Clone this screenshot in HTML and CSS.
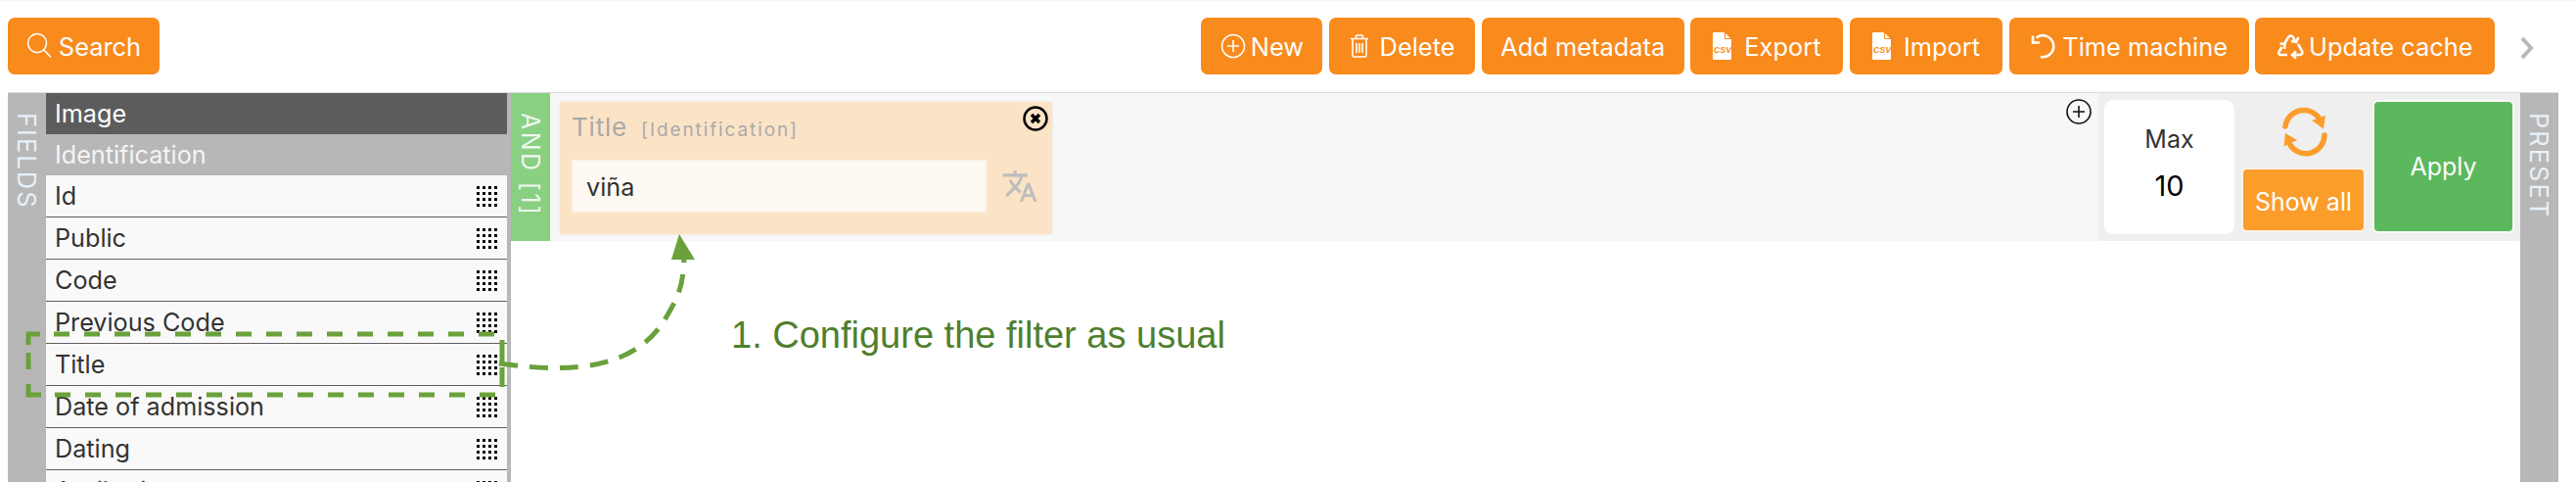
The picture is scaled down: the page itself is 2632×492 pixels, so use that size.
FILE: index.html
```html
<!DOCTYPE html>
<html lang="en">
<head>
<meta charset="utf-8">
<title>Search filters</title>
<link rel="stylesheet" href="styles.css">
</head>
<body>
<div class="page">
  <header class="toolbar">
    <button class="btn btn-search"><svg class="ico" width="26" height="28" viewBox="0 0 26 28"><circle cx="11" cy="11" r="9.5"/><path d="M18 18l7 7.5"/></svg>Search</button>
    <div class="actions">
      <button class="btn btn-new"><svg class="ico" width="26" height="26" viewBox="0 0 26 26"><circle cx="13" cy="13" r="11.5"/><path d="M13 7v12M7 13h12"/></svg>New</button>
      <button class="btn btn-delete"><svg class="ico" width="20" height="24" viewBox="0 0 20 24"><path d="M1 4.500h18M3 5v16.500q0 1.500 1.500 1.500h11q1.500 0 1.500-1.500V5M6.500 4V2q0-1 1-1h5q1 0 1 1v2M7 9v10M10 9v10M13 9v10"/></svg>Delete</button>
      <button class="btn btn-meta">Add metadata</button>
      <button class="btn btn-export"><svg width="20" height="28" viewBox="0 0 20 28"><path class="csv-file" d="M1 0h11l7 7v20a1 1 0 0 1-1 1H1a1 1 0 0 1-1-1V1a1 1 0 0 1 1-1z"/><path class="csv-fold" d="M12.500 0v6.500H19"/><text class="csv-text" x="10" y="21">CSV</text></svg>Export</button>
      <button class="btn btn-import"><svg width="20" height="28" viewBox="0 0 20 28"><path class="csv-file" d="M1 0h11l7 7v20a1 1 0 0 1-1 1H1a1 1 0 0 1-1-1V1a1 1 0 0 1 1-1z"/><path class="csv-fold" d="M12.500 0v6.500H19"/><text class="csv-text" x="10" y="21">CSV</text></svg>Import</button>
      <button class="btn btn-time"><svg class="ico ico-bold" width="28" height="26" viewBox="0 0 28 26"><path d="M6.500 4.500A11 11 0 1 1 11 24M3 2.500v7h7"/></svg>Time machine</button>
      <button class="btn btn-cache"><svg class="ico ico-bold" width="27" height="27" viewBox="0 0 27 27"><path d="M7 11L11 4Q13.500 1 16 4L18 8M21.500 4L19 9L14 8M21 11L25 18Q26.500 21.500 22.500 22L16 22M19 18.500L15 22L19 25.500M4.500 14L1.500 19Q.5 22 4 22L10 22M2.500 10.500L7.500 11L7 16"/></svg>Update cache</button>
      <svg class="chevron" width="14" height="24" viewBox="0 0 14 24"><path d="M2 2l9 10-9 10"/></svg>
    </div>
  </header>
  <main class="workspace">
    <div class="side-label">FIELDS</div>
    <section class="fields">
      <div class="group group-dark">Image</div>
      <div class="group group-light">Identification</div>
      <div class="field"><span>Id</span><i class="dots"></i></div>
      <div class="field"><span>Public</span><i class="dots"></i></div>
      <div class="field"><span>Code</span><i class="dots"></i></div>
      <div class="field"><span>Previous Code</span><i class="dots"></i></div>
      <div class="field"><span>Title</span><i class="dots"></i></div>
      <div class="field"><span>Date of admission</span><i class="dots"></i></div>
      <div class="field"><span>Dating</span><i class="dots"></i></div>
      <div class="field"><span>Attribution</span><i class="dots"></i></div>
    </section>
    <section class="center">
      <div class="filter-panel">
        <div class="and-label">AND [1]</div>
        <div class="filters">
          <article class="filter-card">
            <div class="filter-head"><span class="filter-title">Title</span><span class="filter-group">[Identification]</span></div>
            <div class="filter-body">
              <div class="filter-input">viña</div>
              <svg class="translate" width="38" height="38" viewBox="0 0 24 24"><path d="M12.870 15.070l-2.540-2.510.03-.03c1.740-1.940 2.980-4.170 3.710-6.530H17V4h-7V2H8v2H1v1.990h11.170C11.500 7.920 10.440 9.750 9 11.350 8.070 10.320 7.300 9.190 6.690 8h-2c.73 1.630 1.730 3.170 2.980 4.560l-5.090 5.020L4 19l5-5 3.110 3.110.76-2.040zM18.500 10h-2L12 22h2l1.120-3h4.750L21 22h2l-4.500-12zm-2.620 7l1.620-4.330L19.120 17h-3.240z"/></svg>
            </div>
            <svg class="close" width="26" height="26" viewBox="0 0 26 26"><circle cx="13" cy="13" r="11.500"/><path d="M9 9l8 8M17 9l-8 8"/></svg>
          </article>
          <svg class="add" width="26" height="26" viewBox="0 0 26 26"><circle cx="13" cy="13" r="12"/><path d="M13 7v12M7 13h12"/></svg>
        </div>
        <div class="controls">
          <div class="max-box"><span class="max-label">Max</span><span class="max-value">10</span></div>
          <div class="show-col">
            <svg class="sync" width="60" height="60" viewBox="13 8 60 60"><path class="sync-arc" d="M24 31A19 19 0 0 1 58 22M64 40A19 19 0 0 1 29 50"/><path class="sync-head" d="M65 20l-2 13.500-12-8.500zM24 38l-1.500 13.500 13.500-6.500z"/></svg>
            <button class="btn-show">Show all</button>
          </div>
          <button class="btn-apply">Apply</button>
        </div>
      </div>
    </section>
    <div class="side-label">PRESET</div>
  </main>
  <svg class="guide" width="2632" height="492" viewBox="0 0 2632 492">
    <path class="guide-solid" d="M29 352V341H41M29 360V377M29 392V403H42M513 347V369M513 375V395"/>
    <path class="guide-line" d="M55 341H506M56 403H508"/>
    <path class="guide-curve" d="M510 371C590 382 650 375 680 325C695 300 698 290 699 262"/>
    <path class="guide-head" d="M694 239L710 265L686 265Z"/>
  </svg>
  <p class="note">1. Configure the filter as usual</p>
</div>
</body>
</html>
```
FILE: styles.css
```css
* { box-sizing: border-box; }
html, body { margin: 0; padding: 0; background: #fff; }
body { font-family: Inter, "Liberation Sans", sans-serif; font-size: 25.2px; color: #333; }
.page { position: relative; width: 2632px; height: 492px; overflow: hidden; border-top: 1px solid #f6f6f6; }

.toolbar { display: flex; justify-content: space-between; height: 93px; padding: 17px 43px 0 8px; }
.actions { display: flex; gap: 6.67px; align-items: flex-start; }
.btn { display: flex; align-items: center; justify-content: center; gap: 7px; height: 58px; padding: 0; border: 0; border-radius: 7px; background: #f98a1c; color: #fff; font: 400 25.4px Inter, "Liberation Sans", sans-serif; white-space: nowrap; }
.btn-search { width: 155px; }
.btn-new { width: 124px; gap: 5px; }
.btn-delete { width: 149px; gap: 11px; }
.btn-meta { width: 207px; }
.btn-export { width: 156px; gap: 12px; }
.btn-import { width: 156px; gap: 12px; }
.btn-time { width: 245px; gap: 5px; }
.btn-cache { width: 245px; gap: 5px; }
.ico { fill: none; stroke: #fff; stroke-width: 1.6; }
.ico-bold { stroke-width: 2.6; }
.csv-file { fill: #fff; }
.csv-fold { fill: none; stroke: #f98a1c; stroke-width: 1; }
.csv-text { fill: #f98a1c; font: italic 700 9px "Liberation Sans", sans-serif; text-anchor: middle; }
.chevron { fill: none; stroke: #b9b9b9; stroke-width: 4; margin: 19px 0 0 19px; }

.workspace { display: flex; height: 398px; margin: 0 18px 0 8px; border-top: 1px solid #dcdcdc; }
.side-label { width: 39px; flex: none; background: #b7b7b7; color: #e9f1f8; writing-mode: vertical-rl; font-size: 25.4px; font-weight: 400; letter-spacing: 2.1px; line-height: 39px; padding-top: 20px; }
.fields { width: 475px; flex: none; border-right: 4px solid #b7b7b7; overflow: hidden; }
.group { height: 42px; padding-left: 9px; line-height: 42px; }
.group-dark { background: #5c5c5c; color: #fff; }
.group-light { background: #b7b7b7; color: #f4f4f4; }
.field { display: flex; align-items: center; justify-content: space-between; height: 43px; padding: 0 10px 0 9px; background: #f9f9f9; border-bottom: 1.5px solid #5e5e5e; }
.dots { display: block; width: 21px; height: 21px; background: #000; -webkit-mask: linear-gradient(90deg, #000 3px, transparent 3px) 0 0 / 6px 6px, linear-gradient(#000 3px, transparent 3px) 0 0 / 6px 6px; -webkit-mask-composite: source-in; mask-composite: intersect; }

.center { flex: 1; min-width: 0; }
.filter-panel { display: flex; height: 151px; background: #f7f7f7; }
.and-label { width: 40px; flex: none; background: #8ad083; color: #eef7ee; writing-mode: vertical-rl; font-size: 25px; font-weight: 400; letter-spacing: 2.4px; line-height: 40px; padding-top: 20px; }
.filters { position: relative; flex: 1; padding: 7px 8px; }
.filter-card { position: relative; width: 507px; height: 139px; background: #fbe3c6; border: 2px solid #f3f3f3; padding: 10px 12px; }
.filter-head { display: flex; align-items: baseline; gap: 14px; color: #aaa; }
.filter-title { font-size: 26px; font-weight: 400; letter-spacing: .8px; }
.filter-group { font-size: 19px; font-weight: 400; letter-spacing: 1.9px; }
.filter-body { display: flex; align-items: center; gap: 15px; margin-top: 18px; }
.filter-input { width: 424px; height: 54px; flex: none; background: #fef9f2; border: 2px solid #fbf3ea; padding: 0 13px; line-height: 52px; color: #333; }
.translate { fill: #bdbdbd; }
.close { position: absolute; top: 4px; right: 4px; fill: none; stroke: #000; stroke-width: 2.500; }
.close path { stroke-width: 3.500; }
.add { position: absolute; top: 6px; right: 7px; fill: none; stroke: #111; stroke-width: 1.600; }
.controls { display: flex; width: 431px; flex: none; background: #efefef; padding: 7px 6px 8px 6px; }
.max-box { display: flex; flex-direction: column; align-items: center; width: 133px; height: 137px; background: #fff; border-radius: 9px; padding-top: 26px; }
.max-label { font-size: 25px; line-height: 28px; }
.max-value { font-size: 29px; line-height: 34px; color: #000; margin-top: 17px; }
.show-col { display: flex; flex-direction: column; align-items: center; width: 127px; margin: 0 7px; }
.sync { margin-top: 4px; }
.sync-arc { fill: none; stroke: #fb9d2b; stroke-width: 5.500; stroke-linecap: round; }
.sync-head { fill: #fb9d2b; }
.btn-show { width: 127px; height: 66px; margin-top: 5px; background: #fb9d2b; color: #fff; border: 2px solid #fbf3ea; border-radius: 6px; font: 400 25px Inter, "Liberation Sans", sans-serif; padding: 4px 0 0; }
.btn-apply { width: 145px; height: 136px; background: #5cb85c; color: #fff; border: 2px solid #f8f8f8; border-radius: 6px; font: 400 25px Inter, "Liberation Sans", sans-serif; padding: 0 0 0; }

.guide { position: absolute; top: -1px; left: 0; pointer-events: none; }
.guide-solid { fill: none; stroke: #6aa13b; stroke-width: 5; }
.guide-line { fill: none; stroke: #6aa13b; stroke-width: 5; stroke-dasharray: 16 15; }
.guide-curve { fill: none; stroke: #6aa13b; stroke-width: 5; stroke-dasharray: 19 12; }
.guide-head { fill: #6aa13b; }
.note { position: absolute; left: 747px; top: 319px; margin: 0; font: 400 38px/44px "Liberation Sans", sans-serif; color: #4f7f2e; white-space: nowrap; }
```
